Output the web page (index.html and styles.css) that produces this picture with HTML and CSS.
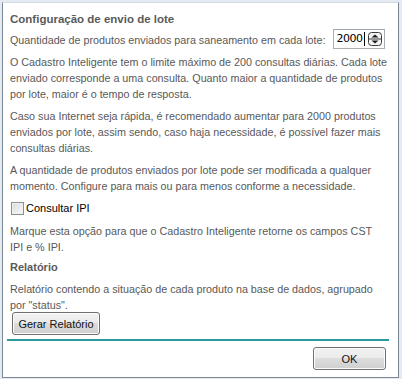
FILE: index.html
```html
<!DOCTYPE html>
<html lang="pt">
<head>
<meta charset="utf-8">
<link rel="stylesheet" href="styles.css">
</head>
<body>
<div class="window">
  <div class="content">
    <div class="title">Configuração de envio de lote</div>
    <div class="qty">
      <span class="qty-label">Quantidade de produtos enviados para saneamento em cada lote:</span>
      <div class="spin">
        <span class="spin-val">2000</span><span class="caret"></span>
        <svg class="spin-btn" width="14" height="14" viewBox="0 0 14 14">
          <rect x="0.5" y="0.5" width="13" height="13" rx="3" ry="3" fill="#f4f4f4" stroke="#3c3c3c"/>
          <line x1="1" y1="7" x2="13" y2="7" stroke="#3c3c3c"/>
          <path d="M3.5 5.5 L7 2.5 L10.5 5.5 Z" fill="#1e1e1e"/>
          <path d="M3.5 8.5 L7 11.5 L10.5 8.5 Z" fill="#1e1e1e"/>
        </svg>
      </div>
    </div>
    <p class="para">O Cadastro Inteligente tem o limite máximo de 200 consultas diárias. Cada lote<br>enviado corresponde a uma consulta. Quanto maior a quantidade de produtos<br>por lote, maior é o tempo de resposta.</p>
    <p class="para">Caso sua Internet seja rápida, é recomendado aumentar para 2000 produtos<br>enviados por lote, assim sendo, caso haja necessidade, é possível fazer mais<br>consultas diárias.</p>
    <p class="para">A quantidade de produtos enviados por lote pode ser modificada a qualquer<br>momento. Configure para mais ou para menos conforme a necessidade.</p>
    <label class="check"><span class="check-box"></span><span class="check-text">Consultar IPI</span></label>
    <p class="para para-tight">Marque esta opção para que o Cadastro Inteligente retorne os campos CST<br>IPI e % IPI.</p>
    <div class="subtitle">Relatório</div>
    <p class="para para-last">Relatório contendo a situação de cada produto na base de dados, agrupado<br>por "status".</p>
    <button class="btn btn-report">Gerar Relatório</button>
  </div>
  <div class="sep"></div>
  <div class="footer">
    <button class="btn btn-ok">OK</button>
  </div>
</div>
</body>
</html>
```
FILE: styles.css
```css
html, body {
  margin: 0;
  padding: 0;
}
body {
  width: 402px;
  height: 379px;
  background: #e4eaf1;
  padding: 2px 3px 1px 2px;
  box-sizing: border-box;
  font-family: "Liberation Sans", Arial, sans-serif;
  font-size: 10.75px;
  color: #595959;
  overflow: hidden;
}
.window {
  height: 100%;
  box-sizing: border-box;
  background: #fff;
  border: 1px solid #7d8895;
  border-top-color: #d3dbe4;
  display: flex;
  flex-direction: column;
}
.content {
  padding: 8px 0 0 7px;
  line-height: 16px;
  white-space: nowrap;
}
.title, .subtitle {
  font-weight: bold;
  color: #5a5a5a;
}
.title {
  font-size: 11.5px;
  margin-bottom: 2px;
}
.subtitle {
  font-size: 11px;
  margin-bottom: 6px;
}
.qty {
  display: flex;
  align-items: center;
  gap: 7px;
  margin-bottom: 5px;
}
.qty-label {
  padding-top: 2px;
}
.spin {
  width: 52px;
  height: 20px;
  box-sizing: border-box;
  border: 1px solid #abadb3;
  border-top-color: #9aa3ae;
  display: flex;
  align-items: center;
  padding-left: 3px;
  font-family: "DejaVu Sans", sans-serif;
  font-size: 11px;
  color: #000;
  letter-spacing: -0.5px;
}
.caret {
  width: 1px;
  height: 14px;
  background: #000;
  margin-left: 1px;
}
.spin-btn {
  margin-left: auto;
  margin-right: 2px;
}
.para {
  margin: 0 0 6px 0;
}
.para-tight {
  margin-bottom: 4px;
}
.para-last {
  margin-bottom: 0;
}
.check {
  display: flex;
  align-items: center;
  gap: 2px;
  margin: 1px 0 7px 1px;
  color: #000;
  font-size: 11px;
}
.check-box {
  width: 11px;
  height: 11px;
  border: 1px solid #8e8f8f;
  background: linear-gradient(135deg, #dcdcdc, #f8f8f8);
  box-shadow: inset 0 0 0 1px #f0f0f0;
}
.btn {
  font-family: "Liberation Sans", Arial, sans-serif;
  font-size: 11px;
  color: #111;
  border: 1px solid #707070;
  border-radius: 3px;
  background: linear-gradient(#f2f2f2 0%, #ebebeb 49%, #dddddd 50%, #cfcfcf 100%);
  box-shadow: inset 0 0 0 1px #fbfbfb;
  height: 23px;
  padding: 0;
}
.btn-report {
  display: block;
  width: 88px;
  margin: -1px 0 0 2px;
}
.sep {
  height: 2px;
  background: #2a9ba0;
  margin: 4px 9px 0 4px;
}
.footer {
  display: flex;
  justify-content: flex-end;
  padding: 6px 12px 0 0;
}
.btn-ok {
  width: 73px;
}
```
